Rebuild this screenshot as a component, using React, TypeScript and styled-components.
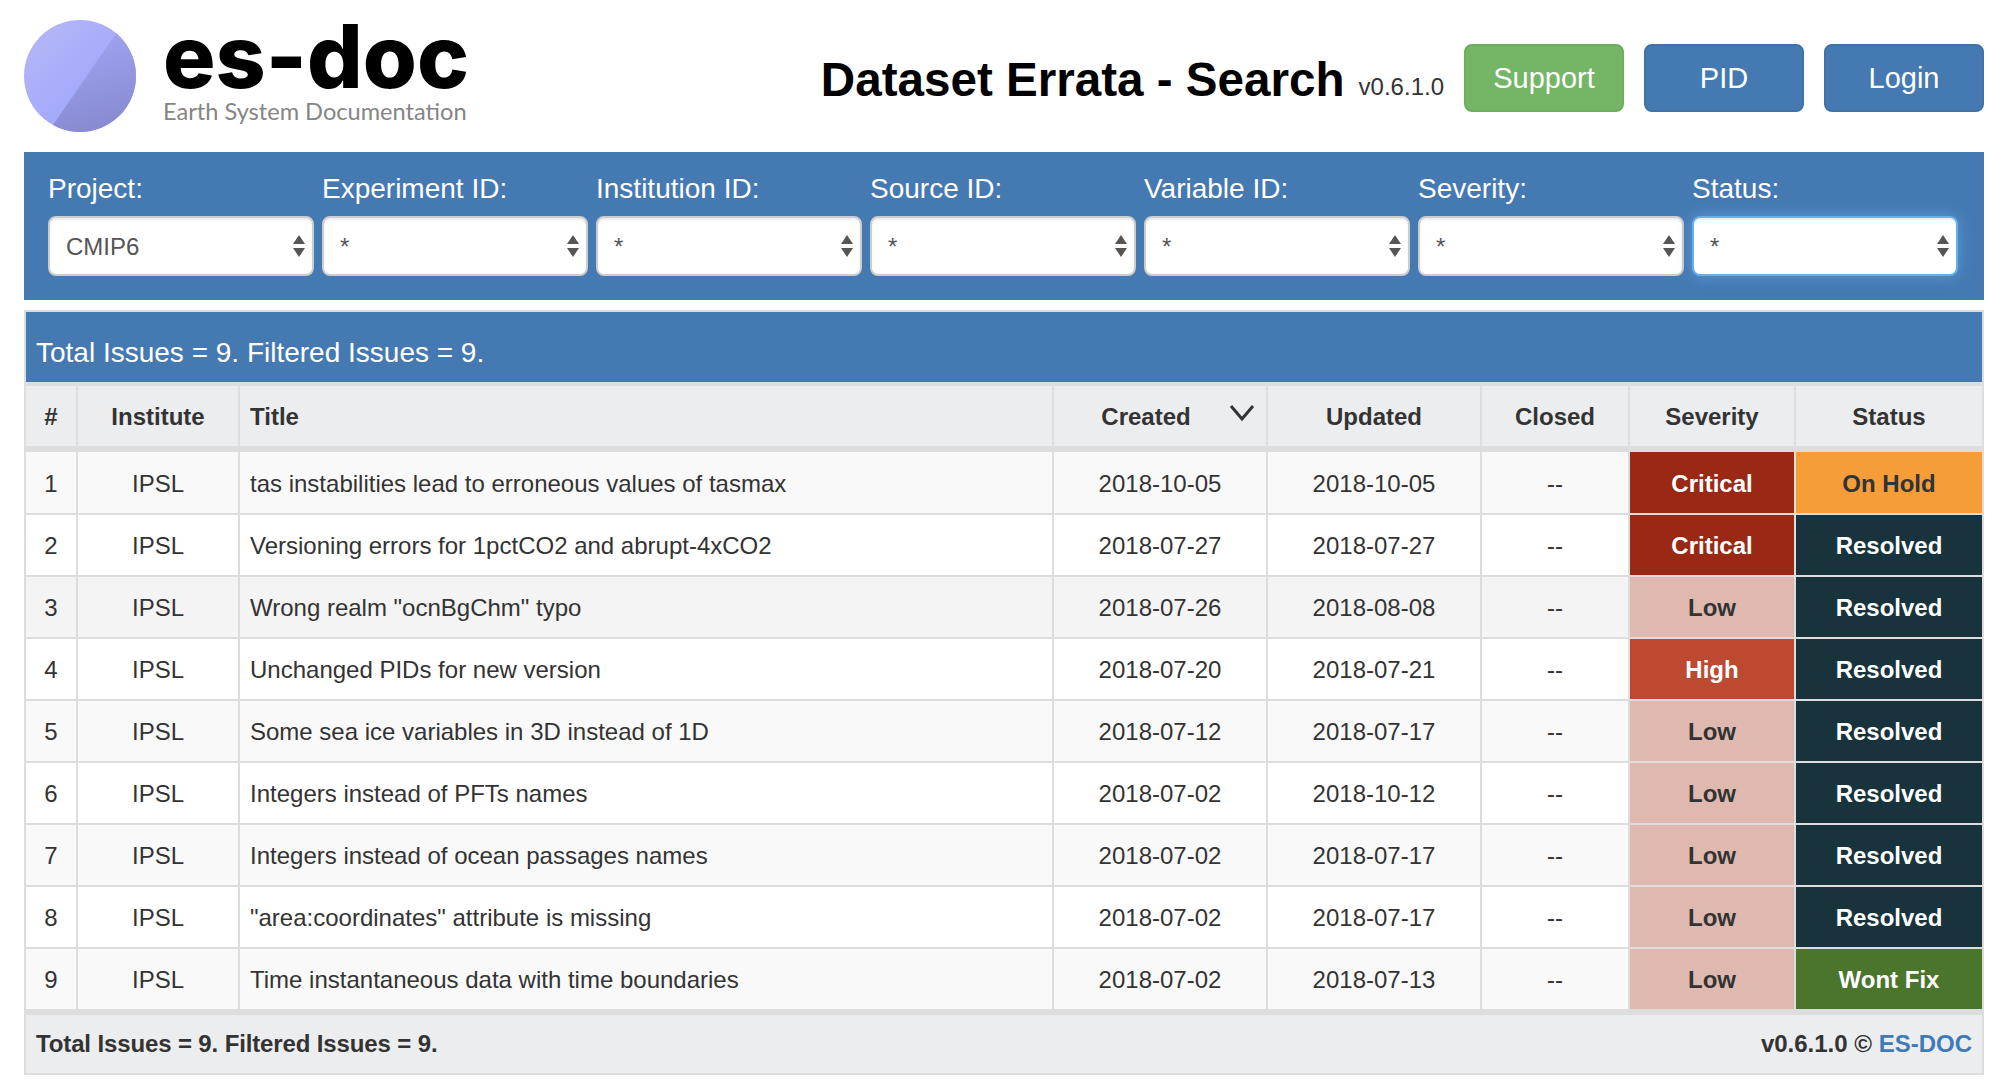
import React from "react";
import styled, { createGlobalStyle } from "styled-components";

const Global = createGlobalStyle`
  html, body { margin: 0; padding: 0; background: #fff; }
  body { font-family: "Liberation Sans", Arial, sans-serif; color: #333; }
  * { box-sizing: border-box; }
`;

const BLUE = "#4579b2";

const Page = styled.div`
  width: 2006px;
  padding: 0 22px 0 24px;
`;

const Header = styled.header`
  display: flex;
  align-items: center;
  height: 152px;
`;

const Brand = styled.div`
  display: flex;
  align-items: center;
  gap: 27px;
  margin-right: auto;
`;

const BrandText = styled.div`
  display: flex;
  flex-direction: column;
  width: 304px;
  margin-top: -8px;
`;

const BrandName = styled.div`
  font-family: Inter, sans-serif;
  font-weight: 800;
  font-size: 87.5px;
  line-height: 76px;
  color: #000;
  white-space: nowrap;
`;

const BrandTag = styled.div`
  font-family: Lato, sans-serif;
  font-weight: 400;
  font-size: 23.6px;
  line-height: 30px;
  margin-top: 2px;
  color: #858585;
  white-space: nowrap;
`;

const Title = styled.h1`
  margin: 8px 14px 0 0;
  font-size: 47.6px;
  line-height: 56px;
  font-weight: 700;
  color: #000;
  white-space: nowrap;
`;

const Version = styled.span`
  font-size: 24px;
  line-height: 30px;
  margin: 22px 20px 0 0;
  color: #333;
`;

const Buttons = styled.div`
  display: flex;
  gap: 20px;
  margin-top: 4px;
`;

const Button = styled.button<{ $variant?: "success" }>`
  width: 160px;
  height: 68px;
  border-radius: 8px;
  border: 2px solid ${(p) => (p.$variant === "success" ? "#6cae5e" : "#3f70a6")};
  background: ${(p) => (p.$variant === "success" ? "#74b566" : BLUE)};
  color: #fff;
  font-family: inherit;
  font-size: 29px;
`;

const FilterBar = styled.section`
  display: grid;
  grid-template-columns: repeat(7, 266px);
  column-gap: 8px;
  height: 148px;
  padding: 17px 24px 0;
  background: ${BLUE};
`;

const Filter = styled.label`
  display: flex;
  flex-direction: column;
  color: #fff;
  font-size: 28px;
  line-height: 40px;
`;

const SelectBox = styled.span`
  position: relative;
  display: block;
  height: 60px;
  margin-top: 7px;
`;

const Select = styled.select<{ $focused?: boolean }>`
  appearance: none;
  display: block;
  width: 100%;
  height: 100%;
  padding: 0 16px;
  border-radius: 8px;
  border: 2px solid ${(p) => (p.$focused ? "#66afe9" : "#ccc")};
  background: #fff;
  color: #555;
  font-family: inherit;
  font-size: 24px;
  outline: none;
  box-shadow: ${(p) =>
    p.$focused
      ? "inset 0 2px 2px rgba(0,0,0,.075), 0 0 16px rgba(102,175,233,.6)"
      : "inset 0 2px 2px rgba(0,0,0,.075)"};
`;

const Arrows = styled.svg`
  position: absolute;
  top: 18px;
  right: 9px;
  width: 12px;
  height: 24px;
  pointer-events: none;
`;

const Results = styled.section`
  margin-top: 10px;
  border: 2px solid #ddd;
  background: #fff;
`;

const Band = styled.div`
  height: 74px;
  padding: 24px 10px 0;
  background: ${BLUE};
  border-bottom: 4px solid #ddd;
  color: #fff;
  font-size: 28px;
  line-height: 34px;
`;

const Table = styled.table`
  width: 100%;
  table-layout: fixed;
  border-collapse: collapse;
  font-size: 24px;
  color: #333;
  tbody tr:first-child td { height: 65px; }
`;

const Th = styled.th<{ $left?: boolean; $sorted?: boolean }>`
  position: relative;
  height: 63px;
  padding: ${(p) => (p.$sorted ? "2px 28px 0 0" : p.$left ? "2px 10px 0" : "2px 0 0")};
  background: #ecedef;
  border: 2px solid #ddd;
  border-top: 0;
  border-bottom-width: 6px;
  font-weight: 700;
  text-align: ${(p) => (p.$left ? "left" : "center")};
  &:first-child { border-left: 0; }
  &:last-child { border-right: 0; }
`;

const Chevron = styled.svg`
  position: absolute;
  top: 18px;
  right: 11px;
  width: 26px;
  height: 18px;
`;

const Row = styled.tr<{ $tone: string }>`
  background: ${(p) => p.$tone};
`;

const TONES: Record<string, [string, string]> = {
  Critical: ["#992914", "#fff"],
  High: ["#bc4930", "#fff"],
  Low: ["#dfb9b0", "#333"],
  "On Hold": ["#f49d39", "#333"],
  Resolved: ["#18333c", "#fff"],
  "Wont Fix": ["#4b742c", "#fff"],
};

const Td = styled.td<{ $left?: boolean }>`
  height: 62px;
  padding: ${(p) => (p.$left ? "2px 10px 0" : "2px 0 0")};
  border: 2px solid #ddd;
  text-align: ${(p) => (p.$left ? "left" : "center")};
  white-space: nowrap;
  &:first-child { border-left: 0; }
  &:last-child { border-right: 0; }
`;

const Tag = styled(Td)<{ $label: string }>`
  background: ${(p) => TONES[p.$label][0]};
  color: ${(p) => TONES[p.$label][1]};
  font-weight: 700;
`;

const Footer = styled.footer`
  display: flex;
  justify-content: space-between;
  align-items: center;
  height: 62px;
  padding: 0 10px;
  background: #ecedef;
  border-top: 4px solid #ddd;
  font-size: 24px;
  font-weight: 700;
  color: #333;
`;

const FooterTotals = styled.span`
  letter-spacing: -0.13px;
`;

const FooterLink = styled.a`
  color: #3f7ab8;
  text-decoration: none;
`;

const filters = [
  ["Project:", "CMIP6"],
  ["Experiment ID:", "*"],
  ["Institution ID:", "*"],
  ["Source ID:", "*"],
  ["Variable ID:", "*"],
  ["Severity:", "*"],
  ["Status:", "*"],
];

const columns = [
  { w: 51 },
  { w: 162 },
  { w: 814 },
  { w: 214 },
  { w: 214 },
  { w: 148 },
  { w: 166 },
  { w: 187 },
];

const rows = [
  ["tas instabilities lead to erroneous values of tasmax", "2018-10-05", "2018-10-05", "Critical", "On Hold"],
  ["Versioning errors for 1pctCO2 and abrupt-4xCO2", "2018-07-27", "2018-07-27", "Critical", "Resolved"],
  ['Wrong realm "ocnBgChm" typo', "2018-07-26", "2018-08-08", "Low", "Resolved"],
  ["Unchanged PIDs for new version", "2018-07-20", "2018-07-21", "High", "Resolved"],
  ["Some sea ice variables in 3D instead of 1D", "2018-07-12", "2018-07-17", "Low", "Resolved"],
  ["Integers instead of PFTs names", "2018-07-02", "2018-10-12", "Low", "Resolved"],
  ["Integers instead of ocean passages names", "2018-07-02", "2018-07-17", "Low", "Resolved"],
  ['"area:coordinates" attribute is missing', "2018-07-02", "2018-07-17", "Low", "Resolved"],
  ["Time instantaneous data with time boundaries", "2018-07-02", "2018-07-13", "Low", "Wont Fix"],
];

const toneFor = (i: number) => {
  if (i === 2) return "#f4f4f4";
  return i % 2 === 0 ? "#f9f9f9" : "#fff";
};

const LogoMark = () => (
  <svg width="112" height="112" viewBox="0 0 112 112" aria-hidden="true">
    <defs>
      <linearGradient id="lightSide" x1="0" y1="0" x2="1" y2="1">
        <stop offset="0" stopColor="#b6b9f6" />
        <stop offset="0.55" stopColor="#a6aafb" />
      </linearGradient>
      <linearGradient id="darkSide" x1="0.5" y1="0.1" x2="0.7" y2="1">
        <stop offset="0" stopColor="#9ea2ee" />
        <stop offset="1" stopColor="#8689cf" />
      </linearGradient>
      <clipPath id="disc">
        <circle cx="56" cy="56" r="56" />
      </clipPath>
    </defs>
    <g clipPath="url(#disc)">
      <rect width="112" height="112" fill="url(#lightSide)" />
      <path d="M95 9 L27 108 L30 112 L112 112 L112 9 Z" fill="url(#darkSide)" />
    </g>
  </svg>
);

export default function App() {
  return (
    <Page>
      <Global />
      <Header>
        <Brand>
          <LogoMark />
          <BrandText>
            <BrandName>es-doc</BrandName>
            <BrandTag>Earth System Documentation</BrandTag>
          </BrandText>
        </Brand>
        <Title>Dataset Errata - Search</Title>
        <Version>v0.6.1.0</Version>
        <Buttons>
          <Button $variant="success">Support</Button>
          <Button>PID</Button>
          <Button>Login</Button>
        </Buttons>
      </Header>

      <FilterBar>
        {filters.map(([label, value], i) => (
          <Filter key={label}>
            {label}
            <SelectBox>
              <Select $focused={i === filters.length - 1} defaultValue={value}>
                <option value={value}>{value}</option>
              </Select>
              <Arrows viewBox="0 0 12 24" aria-hidden="true">
                <path d="M6 1 L12 10 H0 Z M0 14 H12 L6 23 Z" fill="#555" />
              </Arrows>
            </SelectBox>
          </Filter>
        ))}
      </FilterBar>

      <Results>
        <Band>Total Issues = 9. Filtered Issues = 9.</Band>
        <Table>
          <colgroup>
            {columns.map((c, i) => (
              <col key={i} width={c.w} />
            ))}
          </colgroup>
          <thead>
            <tr>
              <Th>#</Th>
              <Th>Institute</Th>
              <Th $left>Title</Th>
              <Th $sorted>
                Created
                <Chevron viewBox="0 0 26 18" aria-hidden="true">
                  <path d="M2 2 L13 15 L24 2" fill="none" stroke="#333" strokeWidth="3" />
                </Chevron>
              </Th>
              <Th>Updated</Th>
              <Th>Closed</Th>
              <Th>Severity</Th>
              <Th>Status</Th>
            </tr>
          </thead>
          <tbody>
            {rows.map(([title, created, updated, severity, status], i) => (
              <Row key={i} $tone={toneFor(i)}>
                <Td>{i + 1}</Td>
                <Td>IPSL</Td>
                <Td $left>{title}</Td>
                <Td>{created}</Td>
                <Td>{updated}</Td>
                <Td>--</Td>
                <Tag $label={severity}>{severity}</Tag>
                <Tag $label={status}>{status}</Tag>
              </Row>
            ))}
          </tbody>
        </Table>
        <Footer>
          <FooterTotals>Total Issues = 9. Filtered Issues = 9.</FooterTotals>
          <span>
            v0.6.1.0 © <FooterLink href="#">ES-DOC</FooterLink>
          </span>
        </Footer>
      </Results>
    </Page>
  );
}
